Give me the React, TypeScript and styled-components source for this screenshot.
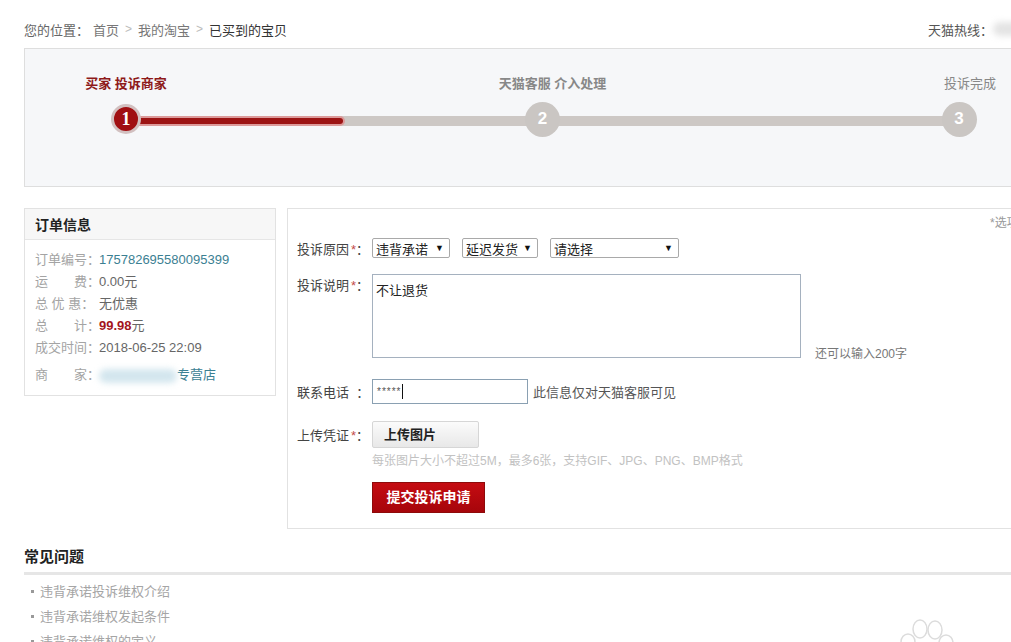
import React from 'react';
import styled, { createGlobalStyle } from 'styled-components';

const GlobalStyle = createGlobalStyle`
  html, body {
    margin: 0;
    padding: 0;
    overflow: hidden;
    background: #fff;
  }
  body {
    font-family: "Liberation Sans", "Noto Sans CJK SC", sans-serif;
    font-size: 13px;
    color: #333;
  }
`;

const steps = [
  { label: '买家 投诉商家', state: 'done', shift: 0 },
  { label: '天猫客服 介入处理', state: 'todo', shift: 20 },
  { label: '投诉完成', state: 'todo', shift: 22 },
];

const order = [
  { label: '订单编号：', value: '175782695580095399', kind: 'link' },
  { label: '运　　费：', value: '0.00元', kind: 'plain' },
  { label: '总 优 惠：', value: '无优惠', kind: 'plain' },
  { label: '总　　计：', value: '99.98', kind: 'price' },
  { label: '成交时间：', value: '2018-06-25 22:09', kind: 'plain' },
];

const faqs = ['违背承诺投诉维权介绍', '违背承诺维权发起条件', '违背承诺维权的定义'];

const App = () => {
  return (
    <>
      <GlobalStyle />
      <Page>
        <TopBar>
          <Crumbs>
            <span className="where">您的位置：</span>
            <a>首页</a>
            <Sep>&gt;</Sep>
            <a>我的淘宝</a>
            <Sep>&gt;</Sep>
            <a className="current">已买到的宝贝</a>
          </Crumbs>
          <Hotline>
            天猫热线：<Blur $w={30} $color="#e4e4e4" />
          </Hotline>
        </TopBar>

        <StepBox>
          <Steps>
            <Track>
              <TrackFill style={{ width: `${(218 / 835) * 100}%` }} />
            </Track>
            {steps.map((s, i) => (
              <Step key={s.label}>
                <StepLabel $active={i === 0} $strong={i < 2} $shift={s.shift}>{s.label}</StepLabel>
                <CircleWrap>
                  <Circle $active={s.state === 'done'}>{i + 1}</Circle>
                </CircleWrap>
              </Step>
            ))}
          </Steps>
        </StepBox>

        <Main>
          <OrderCard>
            <CardHead>订单信息</CardHead>
            <CardBody>
              {order.map((o) => (
                <InfoRow key={o.label}>
                  <InfoLabel>{o.label}</InfoLabel>
                  {o.kind === 'price' ? (
                    <InfoValue><Price>{o.value}</Price>元</InfoValue>
                  ) : (
                    <InfoValue $link={o.kind === 'link'}>{o.value}</InfoValue>
                  )}
                </InfoRow>
              ))}
              <InfoRow $tall>
                <InfoLabel>商　　家：</InfoLabel>
                <InfoValue $link>
                  <Blur $w={78} $color="#d3e6ee" />专营店
                </InfoValue>
              </InfoRow>
            </CardBody>
          </OrderCard>

          <FormPanel>
            <Note>*选项为必填项</Note>
            <FormRow $align="center">
              <FieldLabel>投诉原因<Star>*</Star>：</FieldLabel>
              <Select $w={78}>违背承诺<Arrow>▼</Arrow></Select>
              <Select $w={76}>延迟发货<Arrow>▼</Arrow></Select>
              <Select $w={129}>请选择<Arrow>▼</Arrow></Select>
            </FormRow>

            <FormRow $align="flex-end" $top={16}>
              <FieldLabel $self="flex-start" $pad={1}>投诉说明<Star>*</Star>：</FieldLabel>
              <TextArea>不让退货</TextArea>
              <Counter>还可以输入200字</Counter>
            </FormRow>

            <FormRow $align="center" $top={21}>
              <FieldLabel>联系电话 &nbsp;：</FieldLabel>
              <PhoneInput>*****<Caret /></PhoneInput>
              <Side>此信息仅对天猫客服可见</Side>
            </FormRow>

            <FormRow $align="flex-start" $top={17}>
              <FieldLabel $pad={4}>上传凭证<Star>*</Star>：</FieldLabel>
              <UploadCol>
                <UploadButton>上传图片</UploadButton>
                <Hint>每张图片大小不超过5M，最多6张，支持GIF、JPG、PNG、BMP格式</Hint>
                <SubmitButton>提交投诉申请</SubmitButton>
              </UploadCol>
            </FormRow>
          </FormPanel>
        </Main>

        <Faq>
          <FaqTitle>常见问题</FaqTitle>
          <FaqList>
            {faqs.map((f) => (
              <li key={f}>{f}</li>
            ))}
          </FaqList>
        </Faq>

        <Mark viewBox="0 0 70 30" aria-hidden>
          <ellipse cx="18" cy="26" rx="7" ry="8" />
          <ellipse cx="30" cy="13" rx="7" ry="9" />
          <ellipse cx="45" cy="14" rx="7" ry="9" />
          <ellipse cx="56" cy="27" rx="7" ry="8" />
        </Mark>
      </Page>
    </>
  );
};

const Page = styled.div`
  position: relative;
  width: 1000px;
  padding: 18px 0 0 24px;
  height: 624px;
`;

const TopBar = styled.div`
  display: flex;
  justify-content: space-between;
  align-items: center;
  height: 22px;
  padding-right: 1px;
`;

const Crumbs = styled.div`
  display: flex;
  align-items: center;
  color: #666;
  font-size: 13px;

  .where {
    margin-right: 4px;
  }
  a {
    color: #777;
  }
  a.current {
    color: #333;
  }
`;

const Sep = styled.span`
  color: #bbb;
  margin: 0 6px;
  font-size: 12px;
`;

const Hotline = styled.div`
  display: flex;
  align-items: center;
  color: #555;
  font-size: 13px;
`;

const Blur = styled.span<{ $w: number; $color: string }>`
  display: inline-block;
  width: ${(p) => p.$w}px;
  height: 14px;
  border-radius: 7px;
  background: ${(p) => p.$color};
  filter: blur(3px);
  vertical-align: middle;
`;

const StepBox = styled.div`
  margin-top: 8px;
  background: #f6f7f9;
  border: 1px solid #dedede;
  box-sizing: border-box;
  height: 139px;
`;

const Steps = styled.div`
  position: relative;
  display: flex;
  justify-content: space-between;
  padding: 26px 4px 0 41px;
`;

const Track = styled.div`
  position: absolute;
  left: 101px;
  right: 64px;
  top: 67px;
  height: 10px;
  background: #cdc8c5;
`;

const TrackFill = styled.div`
  height: 6px;
  margin-top: 2px;
  background: #9c1414;
  box-shadow: 0 0 0 2px #dc9a9a;
  border-radius: 0 3px 3px 0;
`;

const Step = styled.div`
  position: relative;
  width: 120px;
  display: flex;
  flex-direction: column;
  align-items: center;
`;

const StepLabel = styled.div<{ $active: boolean; $strong: boolean; $shift: number }>`
  height: 18px;
  line-height: 18px;
  font-size: 13px;
  white-space: nowrap;
  padding-left: ${(p) => p.$shift}px;
  color: ${(p) => (p.$active ? '#8e1a1a' : '#888')};
  font-weight: ${(p) => (p.$strong ? 'bold' : 'normal')};
`;

const CircleWrap = styled.div`
  margin-top: 8px;
  height: 36px;
  display: flex;
  align-items: center;
  justify-content: center;
`;

const Circle = styled.div<{ $active: boolean }>`
  box-sizing: border-box;
  width: ${(p) => (p.$active ? 30 : 35)}px;
  height: ${(p) => (p.$active ? 30 : 35)}px;
  border-radius: 50%;
  display: flex;
  align-items: center;
  justify-content: center;
  color: #fff;
  font-weight: bold;
  background: ${(p) => (p.$active ? '#a00f12' : '#cac6c3')};
  border: ${(p) => (p.$active ? '3px solid #d2c0c0' : 'none')};
  font-family: ${(p) => (p.$active ? '"Liberation Serif", serif' : '"Liberation Sans", sans-serif')};
  font-size: ${(p) => (p.$active ? 18 : 17)}px;
`;

const Main = styled.div`
  display: flex;
  align-items: flex-start;
  gap: 11px;
  margin-top: 21px;
`;

const OrderCard = styled.div`
  width: 252px;
  flex-shrink: 0;
  border: 1px solid #e2e2e2;
  box-sizing: border-box;
  height: 188px;
  background: #fff;
`;

const CardHead = styled.div`
  height: 30px;
  line-height: 32px;
  padding-left: 10px;
  font-size: 14px;
  font-weight: bold;
  color: #222;
  background: #f7f7f7;
  border-bottom: 1px solid #e6e6e6;
`;

const CardBody = styled.div`
  padding: 9px 0 0 10px;
`;

const InfoRow = styled.div<{ $tall?: boolean }>`
  display: flex;
  height: 22px;
  line-height: 22px;
  margin-top: ${(p) => (p.$tall ? 5 : 0)}px;
  font-size: 13px;
  white-space: nowrap;
`;

const InfoLabel = styled.span`
  width: 64px;
  color: #a4a4a4;
`;

const InfoValue = styled.span<{ $link?: boolean }>`
  color: ${(p) => (p.$link ? '#3b8092' : '#666')};
`;

const Price = styled.b`
  color: #a3141c;
`;

const FormPanel = styled.div`
  position: relative;
  width: 760px;
  flex-shrink: 0;
  height: 321px;
  box-sizing: border-box;
  border: 1px solid #e2e2e2;
  padding: 0 0 0 9px;
`;

const Note = styled.div`
  padding: 4px 0 0 693px;
  height: 25px;
  box-sizing: border-box;
  font-size: 12px;
  color: #999;
  white-space: nowrap;
`;

const FormRow = styled.div<{ $align: string; $top?: number }>`
  display: flex;
  align-items: ${(p) => p.$align};
  margin-top: ${(p) => p.$top ?? 4}px;
`;

const FieldLabel = styled.div<{ $self?: string; $pad?: number }>`
  width: 75px;
  flex-shrink: 0;
  align-self: ${(p) => p.$self ?? 'auto'};
  padding-top: ${(p) => p.$pad ?? 0}px;
  color: #444;
  font-size: 13px;
  white-space: nowrap;
`;

const Star = styled.span`
  color: #c24b4b;
  margin-left: 2px;
`;

const Select = styled.div<{ $w: number }>`
  width: ${(p) => p.$w}px;
  height: 20px;
  box-sizing: border-box;
  border: 1px solid #a9a9a9;
  border-radius: 2px;
  margin-right: 12px;
  padding: 0 5px 0 3px;
  display: flex;
  align-items: center;
  justify-content: space-between;
  font-size: 13px;
  color: #222;
  background: #fff;
  white-space: nowrap;
`;

const Arrow = styled.span`
  font-size: 9px;
  color: #111;
`;

const TextArea = styled.div`
  width: 429px;
  height: 84px;
  box-sizing: border-box;
  border: 1px solid #a5b1bf;
  padding: 5px 3px;
  font-size: 13px;
  color: #222;
  flex-shrink: 0;
`;

const Counter = styled.span`
  margin-left: 14px;
  margin-bottom: -3px;
  color: #777;
  font-size: 12px;
`;

const PhoneInput = styled.div`
  width: 156px;
  height: 25px;
  box-sizing: border-box;
  border: 1px solid #8aa0b2;
  padding: 0 4px;
  display: flex;
  align-items: center;
  font-size: 10px;
  color: #555;
  letter-spacing: 1px;
`;

const Caret = styled.span`
  display: inline-block;
  width: 1px;
  height: 15px;
  background: #111;
  margin-left: 1px;
`;

const Side = styled.span`
  margin-left: 5px;
  color: #555;
  font-size: 13px;
`;

const UploadCol = styled.div`
  display: flex;
  flex-direction: column;
  align-items: flex-start;
`;

const UploadButton = styled.div`
  width: 107px;
  height: 27px;
  box-sizing: border-box;
  border: 1px solid #d6d6d6;
  border-radius: 2px;
  background: linear-gradient(#fbfbfb, #e8e8e8);
  padding-left: 11px;
  line-height: 26px;
  font-weight: bold;
  font-size: 13px;
  color: #222;
`;

const Hint = styled.div`
  margin-top: 3px;
  font-size: 12px;
  color: #c2c2c2;
  white-space: nowrap;
`;

const SubmitButton = styled.div`
  margin-top: 14px;
  width: 113px;
  height: 31px;
  box-sizing: border-box;
  border: 1px solid #8e0a0a;
  background: linear-gradient(#c50c12, #a6050b);
  color: #fff;
  font-weight: bold;
  font-size: 14px;
  line-height: 29px;
  text-align: center;
`;

const Faq = styled.div`
  margin-top: 16px;
`;

const FaqTitle = styled.div`
  font-size: 15px;
  font-weight: bold;
  color: #222;
  padding-bottom: 6px;
  border-bottom: 3px solid #e6e6e6;
`;

const FaqList = styled.ul`
  list-style: none;
  margin: 4px 0 0;
  padding: 0 0 0 6px;

  li {
    position: relative;
    height: 25px;
    line-height: 25px;
    padding-left: 10px;
    font-size: 13px;
    color: #a5a5a5;
  }
  li::before {
    content: '';
    position: absolute;
    left: 1px;
    top: 11px;
    width: 3px;
    height: 3px;
    background: #999;
  }
`;

const Mark = styled.svg`
  position: absolute;
  left: 890px;
  top: 616px;
  width: 70px;
  height: 30px;
  fill: none;
  stroke: #dcdcdc;
  stroke-width: 1.5;
`;

export default App;
